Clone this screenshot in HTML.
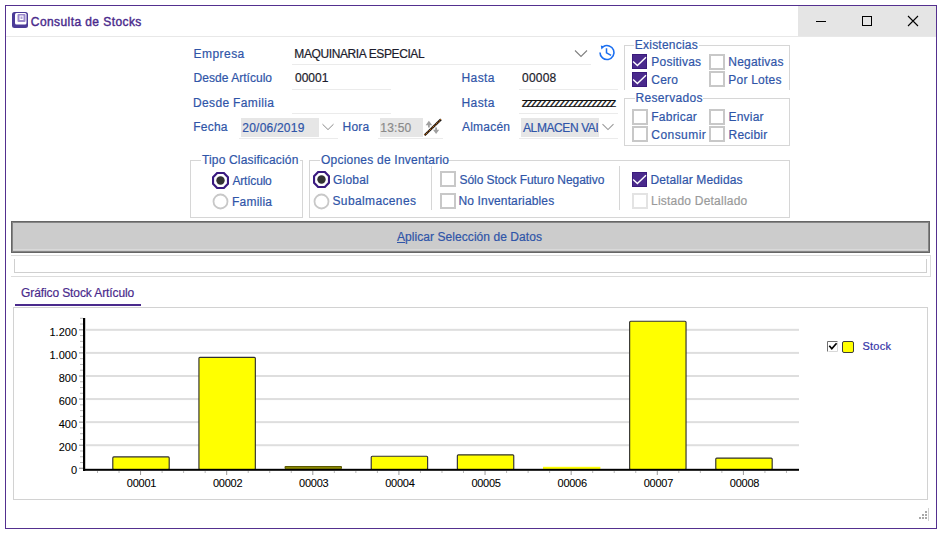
<!DOCTYPE html>
<html><head><meta charset="utf-8"><style>
html,body{margin:0;padding:0;background:#fff;}
body{width:941px;height:533px;position:relative;overflow:hidden;font-family:"Liberation Sans", sans-serif;}
.t{position:absolute;white-space:nowrap;-webkit-text-stroke:0.2px currentColor;}
.r{position:absolute;}
</style></head><body>
<div class="r" style="left:5px;top:5px;width:932px;height:524px;border:1px solid #54308f;box-sizing:border-box;background:#fff;"></div>
<div class="r" style="left:798px;top:6px;width:138px;height:31px;background:#e5e5e5;"></div>
<div class="r" style="left:6px;top:36px;width:930px;height:1px;background:#e8e8e8;"></div>
<svg class="r" style="left:12px;top:12px" width="16" height="16" viewBox="0 0 16 16">
<rect x="0" y="0" width="16" height="16" rx="2.5" fill="#4b3b98"/>
<rect x="3" y="1" width="11.5" height="11.5" rx="1.5" fill="#fff"/>
<rect x="5.5" y="2" width="8" height="8" rx="1" fill="#9a88cc"/>
<rect x="7.5" y="3.5" width="4" height="4.5" fill="#fff"/>
<rect x="8.5" y="4.5" width="2" height="2.5" fill="#b0a4d8"/>
</svg>
<div class="t" style="left:30.8px;top:15.84px;font-size:12px;line-height:12px;color:#4a2a8c;letter-spacing:0.42px;-webkit-text-stroke:0.4px #4a2a8c;">Consulta de Stocks</div>
<div class="r" style="left:816px;top:21px;width:10px;height:1px;background:#000;"></div>
<div class="r" style="left:862px;top:16px;width:10px;height:10px;border:1px solid #000;box-sizing:border-box;"></div>
<svg class="r" style="left:907px;top:15px" width="12" height="12" viewBox="0 0 12 12">
<path d="M1 1 L11 11 M11 1 L1 11" stroke="#000" stroke-width="1.1" fill="none"/></svg>
<div class="t" style="left:193.6px;top:47.84px;font-size:12px;line-height:12px;color:#2f55a8;letter-spacing:0.44px;">Empresa</div>
<div class="t" style="left:294.3px;top:47.84px;font-size:12px;line-height:12px;color:#1c1c2c;letter-spacing:-0.39px;">MAQUINARIA ESPECIAL</div>
<div class="r" style="left:292px;top:64px;width:299px;height:1px;background:#ebebeb;"></div>
<svg class="r" style="left:574px;top:49px" width="14" height="9" viewBox="0 0 14 9"><path d="M1 1.5 L7 7.5 L13 1.5" stroke="#808080" stroke-width="1.1" fill="none"/></svg>
<svg class="r" style="left:596px;top:42px" width="22" height="22" viewBox="0 0 22 22">
<path d="M4 10.5 A7 7 0 1 0 7.3 4.6" stroke="#1a6ef0" stroke-width="1.6" fill="none"/>
<path d="M4.8 3.4 L8.6 4.4 L5.4 7.4 Z" fill="#1a6ef0"/>
<path d="M10.5 6.2 V10.8 L15.1 13.4" stroke="#1a6ef0" stroke-width="1.5" fill="none"/>
</svg>
<div class="t" style="left:193.6px;top:71.84px;font-size:12px;line-height:12px;color:#2f55a8;letter-spacing:0.03px;">Desde Artículo</div>
<div class="t" style="left:295px;top:71.84px;font-size:12px;line-height:12px;color:#1c1c2c;letter-spacing:0px;">00001</div>
<div class="r" style="left:292px;top:89px;width:99px;height:1px;background:#ebebeb;"></div>
<div class="t" style="left:461.5px;top:71.84px;font-size:12px;line-height:12px;color:#2f55a8;letter-spacing:0.4px;">Hasta</div>
<div class="t" style="left:522px;top:71.84px;font-size:12px;line-height:12px;color:#1c1c2c;letter-spacing:0.22px;">00008</div>
<div class="r" style="left:519px;top:89px;width:99px;height:1px;background:#ebebeb;"></div>
<div class="t" style="left:193px;top:96.84px;font-size:12px;line-height:12px;color:#2f55a8;letter-spacing:0.35px;">Desde Familia</div>
<div class="r" style="left:292px;top:113px;width:99px;height:1px;background:#ebebeb;"></div>
<div class="t" style="left:461.5px;top:96.84px;font-size:12px;line-height:12px;color:#2f55a8;letter-spacing:0.4px;">Hasta</div>
<div class="t" style="left:521.5px;top:95.57px;font-size:13.5px;line-height:13.5px;color:#111;letter-spacing:-2.1px;-webkit-text-stroke:0.1px #111;">zzzzzzzzzzzzzzzzzzzz</div>
<div class="r" style="left:519px;top:113px;width:99px;height:1px;background:#ebebeb;"></div>
<div class="t" style="left:193.3px;top:121.44px;font-size:12px;line-height:12px;color:#2f55a8;letter-spacing:0.22px;">Fecha</div>
<div class="r" style="left:241px;top:118px;width:78px;height:19px;background:#e6e6e6;"></div>
<div class="t" style="left:242.3px;top:121.54px;font-size:12px;line-height:12px;color:#2f55a8;letter-spacing:0.22px;">20/06/2019</div>
<svg class="r" style="left:321px;top:123px" width="14" height="8" viewBox="0 0 14 8"><path d="M1.5 1.2 L7 6.6 L12.5 1.2" stroke="#8a8a8a" stroke-width="1" fill="none"/></svg>
<div class="r" style="left:239px;top:138px;width:99px;height:1px;background:#ebebeb;"></div>
<div class="t" style="left:342.5px;top:121.44px;font-size:12px;line-height:12px;color:#2f55a8;letter-spacing:0.22px;">Hora</div>
<div class="r" style="left:380px;top:118px;width:43px;height:19px;background:#e6e6e6;"></div>
<div class="t" style="left:380.3px;top:121.54px;font-size:12px;line-height:12px;color:#8a8a8a;letter-spacing:0.22px;">13:50</div>
<svg class="r" style="left:420px;top:114px" width="26" height="26" viewBox="0 0 26 26">
<path d="M5.6 11.2 L8.9 6.8 L12.2 11.2 Z M8 11 H9.8 V13.6 H8 Z" fill="#a0a0a0"/>
<path d="M13 15.8 L19.2 15.8 L16.1 20 Z M15.2 13.4 H17 V16 H15.2 Z" fill="#a0a0a0"/>
<path d="M4.6 21.2 L21 5.4" stroke="#111" stroke-width="2.2" fill="none"/>
<path d="M4.6 21.2 L21 5.4" stroke="#e07818" stroke-width="1.1" stroke-dasharray="1 1" fill="none"/>
</svg>
<div class="r" style="left:378px;top:138px;width:65px;height:1px;background:#ebebeb;"></div>
<div class="t" style="left:462px;top:121.44px;font-size:12px;line-height:12px;color:#2f55a8;letter-spacing:0.22px;">Almacén</div>
<div class="r" style="left:521px;top:118px;width:78px;height:19px;background:#e6e6e6;"></div>
<div class="t" style="left:522px;top:118px;width:76px;height:19px;overflow:hidden;"><div class="t" style="left:1px;top:3.84px;font-size:12px;line-height:12px;letter-spacing:-0.4px;color:#2f55a8">ALMACEN VALENCIA</div></div>
<svg class="r" style="left:601px;top:123px" width="14" height="8" viewBox="0 0 14 8"><path d="M1.5 1.2 L7 6.6 L12.5 1.2" stroke="#9a9a9a" stroke-width="1.1" fill="none"/></svg>
<div class="r" style="left:519px;top:138px;width:99px;height:1px;background:#ebebeb;"></div>
<div class="r" style="left:624px;top:45px;width:10px;height:1px;background:#d6d6d6;"></div>
<div class="r" style="left:699px;top:45px;width:91px;height:1px;background:#d6d6d6;"></div>
<div class="r" style="left:624px;top:45px;width:1px;height:45px;background:#d6d6d6;"></div>
<div class="r" style="left:789px;top:45px;width:1px;height:45px;background:#d6d6d6;"></div>
<div class="t" style="left:634.8px;top:38.84px;font-size:12px;line-height:12px;color:#2f55a8;letter-spacing:0.22px;">Existencias</div>
<svg class="r" style="left:632.3px;top:54px" width="15" height="15" viewBox="0 0 15 15"><rect x="0" y="0" width="15" height="15" fill="#4a2a8c"/><rect x="0.5" y="0.5" width="14" height="14" fill="none" stroke="#3a1a7c" stroke-width="1"/><path d="M1.1 7.5 L5.4 11.5 L14 3.2" stroke="#fff" stroke-width="1.4" fill="none"/></svg>
<div class="t" style="left:651.3px;top:55.84px;font-size:12px;line-height:12px;color:#2f55a8;letter-spacing:0.22px;">Positivas</div>
<svg class="r" style="left:632.3px;top:72px" width="15" height="15" viewBox="0 0 15 15"><rect x="0" y="0" width="15" height="15" fill="#4a2a8c"/><rect x="0.5" y="0.5" width="14" height="14" fill="none" stroke="#3a1a7c" stroke-width="1"/><path d="M1.1 7.5 L5.4 11.5 L14 3.2" stroke="#fff" stroke-width="1.4" fill="none"/></svg>
<div class="t" style="left:651.3px;top:73.84px;font-size:12px;line-height:12px;color:#2f55a8;letter-spacing:0.22px;">Cero</div>
<div class="r" style="left:709px;top:54px;width:16px;height:16px;border:2px solid #c8c8c8;box-sizing:border-box;"></div>
<div class="t" style="left:728.3px;top:55.84px;font-size:12px;line-height:12px;color:#2f55a8;letter-spacing:0.22px;">Negativas</div>
<div class="r" style="left:709px;top:71px;width:16px;height:16px;border:2px solid #c8c8c8;box-sizing:border-box;"></div>
<div class="t" style="left:728.3px;top:73.84px;font-size:12px;line-height:12px;color:#2f55a8;letter-spacing:0.22px;">Por Lotes</div>
<div class="r" style="left:624px;top:98px;width:11px;height:1px;background:#d6d6d6;"></div>
<div class="r" style="left:703px;top:98px;width:87px;height:1px;background:#d6d6d6;"></div>
<div class="r" style="left:624px;top:98px;width:1px;height:48px;background:#d6d6d6;"></div>
<div class="r" style="left:789px;top:98px;width:1px;height:48px;background:#d6d6d6;"></div>
<div class="r" style="left:624px;top:145px;width:166px;height:1px;background:#d6d6d6;"></div>
<div class="t" style="left:635.5px;top:92.34px;font-size:12px;line-height:12px;color:#2f55a8;letter-spacing:0.33px;">Reservados</div>
<div class="r" style="left:632px;top:109px;width:16px;height:16px;border:2px solid #c8c8c8;box-sizing:border-box;"></div>
<div class="t" style="left:651.3px;top:111.34px;font-size:12px;line-height:12px;color:#2f55a8;letter-spacing:0.22px;">Fabricar</div>
<div class="r" style="left:632px;top:126px;width:16px;height:16px;border:2px solid #c8c8c8;box-sizing:border-box;"></div>
<div class="t" style="left:651.3px;top:129.14px;font-size:12px;line-height:12px;color:#2f55a8;letter-spacing:0.45px;">Consumir</div>
<div class="r" style="left:709px;top:109px;width:16px;height:16px;border:2px solid #c8c8c8;box-sizing:border-box;"></div>
<div class="t" style="left:728.5px;top:111.34px;font-size:12px;line-height:12px;color:#2f55a8;letter-spacing:0.22px;">Enviar</div>
<div class="r" style="left:709px;top:126px;width:16px;height:16px;border:2px solid #c8c8c8;box-sizing:border-box;"></div>
<div class="t" style="left:728.5px;top:129.14px;font-size:12px;line-height:12px;color:#2f55a8;letter-spacing:0.22px;">Recibir</div>
<div class="r" style="left:190px;top:160px;width:11px;height:1px;background:#d6d6d6;"></div>
<div class="r" style="left:300px;top:160px;width:3px;height:1px;background:#d6d6d6;"></div>
<div class="r" style="left:190px;top:160px;width:1px;height:58px;background:#d6d6d6;"></div>
<div class="r" style="left:302px;top:160px;width:1px;height:58px;background:#d6d6d6;"></div>
<div class="r" style="left:190px;top:217px;width:113px;height:1px;background:#d6d6d6;"></div>
<div class="t" style="left:202px;top:153.84px;font-size:12px;line-height:12px;color:#2f55a8;letter-spacing:0.16px;">Tipo Clasificación</div>
<svg class="r" style="left:212px;top:172px" width="17" height="17" viewBox="0 0 17 17"><path d="M5.2 1 H11.8 L16 5.2 V11.8 L11.8 16 H5.2 L1 11.8 V5.2 Z" fill="#fff" stroke="#3a1a80" stroke-width="2.2"/><circle cx="8.5" cy="8.5" r="4.2" fill="#333"/></svg>
<div class="t" style="left:232.5px;top:175.34px;font-size:12px;line-height:12px;color:#2f55a8;letter-spacing:-0.2px;">Artículo</div>
<svg class="r" style="left:212px;top:192.5px" width="17" height="17" viewBox="0 0 17 17"><circle cx="8.5" cy="8.5" r="7" fill="#fff" stroke="#c8c8c8" stroke-width="1.8"/></svg>
<div class="t" style="left:232px;top:195.54px;font-size:12px;line-height:12px;color:#2f55a8;letter-spacing:0.22px;">Familia</div>
<div class="r" style="left:309px;top:160px;width:11px;height:1px;background:#d6d6d6;"></div>
<div class="r" style="left:447px;top:160px;width:343px;height:1px;background:#d6d6d6;"></div>
<div class="r" style="left:309px;top:160px;width:1px;height:58px;background:#d6d6d6;"></div>
<div class="r" style="left:789px;top:160px;width:1px;height:58px;background:#d6d6d6;"></div>
<div class="r" style="left:309px;top:217px;width:481px;height:1px;background:#d6d6d6;"></div>
<div class="t" style="left:321px;top:153.84px;font-size:12px;line-height:12px;color:#2f55a8;letter-spacing:0.22px;">Opciones de Inventario</div>
<svg class="r" style="left:313px;top:171px" width="17" height="17" viewBox="0 0 17 17"><path d="M5.2 1 H11.8 L16 5.2 V11.8 L11.8 16 H5.2 L1 11.8 V5.2 Z" fill="#fff" stroke="#3a1a80" stroke-width="2.2"/><circle cx="8.5" cy="8.5" r="4.2" fill="#333"/></svg>
<div class="t" style="left:333px;top:174.04px;font-size:12px;line-height:12px;color:#2f55a8;letter-spacing:0.22px;">Global</div>
<svg class="r" style="left:313px;top:192.5px" width="17" height="17" viewBox="0 0 17 17"><circle cx="8.5" cy="8.5" r="7" fill="#fff" stroke="#c8c8c8" stroke-width="1.8"/></svg>
<div class="t" style="left:332.5px;top:195.34px;font-size:12px;line-height:12px;color:#2f55a8;letter-spacing:0.37px;">Subalmacenes</div>
<div class="r" style="left:431px;top:166px;width:1px;height:44px;background:#d6d6d6;"></div>
<div class="r" style="left:440px;top:171px;width:16px;height:16px;border:2px solid #c8c8c8;box-sizing:border-box;"></div>
<div class="t" style="left:459.5px;top:174.04px;font-size:12px;line-height:12px;color:#2f55a8;letter-spacing:-0.05px;">Sólo Stock Futuro Negativo</div>
<div class="r" style="left:440px;top:193px;width:16px;height:16px;border:2px solid #c8c8c8;box-sizing:border-box;"></div>
<div class="t" style="left:458.5px;top:195.34px;font-size:12px;line-height:12px;color:#2f55a8;letter-spacing:0.14px;">No Inventariables</div>
<div class="r" style="left:619px;top:166px;width:1px;height:44px;background:#d6d6d6;"></div>
<svg class="r" style="left:632.3px;top:172px" width="15" height="15" viewBox="0 0 15 15"><rect x="0" y="0" width="15" height="15" fill="#4a2a8c"/><rect x="0.5" y="0.5" width="14" height="14" fill="none" stroke="#3a1a7c" stroke-width="1"/><path d="M1.1 7.5 L5.4 11.5 L14 3.2" stroke="#fff" stroke-width="1.4" fill="none"/></svg>
<div class="t" style="left:650.4px;top:174.04px;font-size:12px;line-height:12px;color:#2f55a8;letter-spacing:0.14px;">Detallar Medidas</div>
<div class="r" style="left:632px;top:193px;width:16px;height:16px;border:2px solid #e3e3e3;box-sizing:border-box;"></div>
<div class="t" style="left:651px;top:195.14px;font-size:12px;line-height:12px;color:#9a9a9a;letter-spacing:0.22px;">Listado Detallado</div>
<div class="r" style="left:11px;top:221px;width:919px;height:32px;background:#cccccc;border:1px solid #666;box-shadow:inset 0 0 0 1px #858585;box-sizing:border-box;"></div>
<div class="r" style="left:13px;top:249px;width:915px;height:1px;background:#d9d9d9;"></div>
<div class="t" style="left:397px;top:230.84px;font-size:12px;line-height:12px;color:#2f55a8;letter-spacing:0.06px;"><u style="text-decoration-thickness:1px;text-underline-offset:1px">A</u>plicar Selección de Datos</div>
<div class="r" style="left:11px;top:255px;width:920px;height:1px;background:#dcdcdc;"></div>
<div class="r" style="left:11px;top:276px;width:920px;height:1px;background:#dcdcdc;"></div>
<div class="r" style="left:930px;top:255px;width:1px;height:22px;background:#dcdcdc;"></div>
<div class="r" style="left:14px;top:259px;width:1px;height:14px;background:#cfcfcf;"></div>
<div class="r" style="left:926px;top:259px;width:1px;height:14px;background:#cfcfcf;"></div>
<div class="r" style="left:14px;top:272px;width:913px;height:1px;background:#cfcfcf;"></div>
<div class="t" style="left:21px;top:286.84px;font-size:12px;line-height:12px;color:#4a2a8c;letter-spacing:-0.1px;">Gráfico Stock Artículo</div>
<div class="r" style="left:15px;top:304px;width:126px;height:2px;background:#4a2a8c;"></div>
<div class="r" style="left:13px;top:307px;width:915px;height:193px;border:1px solid #d2d2d2;box-sizing:border-box;"></div>
<div class="r" style="left:925px;top:511px;width:2px;height:2px;background:#a8a8a8;"></div>
<div class="r" style="left:922px;top:514px;width:2px;height:2px;background:#a8a8a8;"></div>
<div class="r" style="left:925px;top:514px;width:2px;height:2px;background:#a8a8a8;"></div>
<div class="r" style="left:919px;top:517px;width:2px;height:2px;background:#a8a8a8;"></div>
<div class="r" style="left:922px;top:517px;width:2px;height:2px;background:#a8a8a8;"></div>
<div class="r" style="left:925px;top:517px;width:2px;height:2px;background:#a8a8a8;"></div>
<div class="r" style="left:928px;top:508px;width:1px;height:13px;background:#d0d0d0;"></div>
<svg class="r" style="left:0px;top:0px" width="941" height="533" viewBox="0 0 941 533">
<rect x="86" y="444.22" width="713" height="2" fill="#dedede"/>
<rect x="79" y="444.62" width="4" height="1.2" fill="#9a9a9a"/>
<rect x="86" y="421.14" width="713" height="2" fill="#dedede"/>
<rect x="79" y="421.54" width="4" height="1.2" fill="#9a9a9a"/>
<rect x="86" y="398.06" width="713" height="2" fill="#dedede"/>
<rect x="79" y="398.46" width="4" height="1.2" fill="#9a9a9a"/>
<rect x="86" y="374.98" width="713" height="2" fill="#dedede"/>
<rect x="79" y="375.38" width="4" height="1.2" fill="#9a9a9a"/>
<rect x="86" y="351.90" width="713" height="2" fill="#dedede"/>
<rect x="79" y="352.30" width="4" height="1.2" fill="#9a9a9a"/>
<rect x="86" y="328.82" width="713" height="2" fill="#dedede"/>
<rect x="79" y="329.22" width="4" height="1.2" fill="#9a9a9a"/>
<rect x="80" y="462.03" width="3" height="1" fill="#b8b8b8"/>
<rect x="80" y="456.26" width="3" height="1" fill="#b8b8b8"/>
<rect x="80" y="450.49" width="3" height="1" fill="#b8b8b8"/>
<rect x="80" y="438.95" width="3" height="1" fill="#b8b8b8"/>
<rect x="80" y="433.18" width="3" height="1" fill="#b8b8b8"/>
<rect x="80" y="427.41" width="3" height="1" fill="#b8b8b8"/>
<rect x="80" y="415.87" width="3" height="1" fill="#b8b8b8"/>
<rect x="80" y="410.10" width="3" height="1" fill="#b8b8b8"/>
<rect x="80" y="404.33" width="3" height="1" fill="#b8b8b8"/>
<rect x="80" y="392.79" width="3" height="1" fill="#b8b8b8"/>
<rect x="80" y="387.02" width="3" height="1" fill="#b8b8b8"/>
<rect x="80" y="381.25" width="3" height="1" fill="#b8b8b8"/>
<rect x="80" y="369.71" width="3" height="1" fill="#b8b8b8"/>
<rect x="80" y="363.94" width="3" height="1" fill="#b8b8b8"/>
<rect x="80" y="358.17" width="3" height="1" fill="#b8b8b8"/>
<rect x="80" y="346.63" width="3" height="1" fill="#b8b8b8"/>
<rect x="80" y="340.86" width="3" height="1" fill="#b8b8b8"/>
<rect x="80" y="335.09" width="3" height="1" fill="#b8b8b8"/>
<rect x="80" y="323.55" width="3" height="1" fill="#b8b8b8"/>
<rect x="80" y="317.78" width="3" height="1" fill="#b8b8b8"/>
<rect x="79" y="467.70" width="4" height="1.2" fill="#9a9a9a"/>
<rect x="112.80" y="456.91" width="56.4" height="12.59" rx="1" fill="#ffff00" stroke="#303030" stroke-width="1.15"/>
<rect x="198.94" y="357.32" width="56.4" height="112.18" rx="1" fill="#ffff00" stroke="#303030" stroke-width="1.15"/>
<rect x="284.58" y="466" width="57.4" height="3" rx="1" fill="#5a5800"/>
<rect x="285.58" y="467" width="55.4" height="2" fill="#8a8800"/>
<rect x="371.22" y="456.22" width="56.4" height="13.28" rx="1" fill="#ffff00" stroke="#303030" stroke-width="1.15"/>
<rect x="457.36" y="454.84" width="56.4" height="14.66" rx="1" fill="#ffff00" stroke="#303030" stroke-width="1.15"/>
<rect x="543.00" y="466.8" width="57.4" height="2.2" fill="#ffff00"/>
<rect x="629.64" y="321.20" width="56.4" height="148.30" rx="1" fill="#ffff00" stroke="#303030" stroke-width="1.15"/>
<rect x="715.78" y="458.07" width="56.4" height="11.43" rx="1" fill="#ffff00" stroke="#303030" stroke-width="1.15"/>
<rect x="97.00" y="471" width="1" height="2" fill="#b8b8b8"/>
<rect x="118.53" y="471" width="1" height="2" fill="#b8b8b8"/>
<rect x="140.06" y="471" width="1" height="4" fill="#9a9a9a"/>
<rect x="161.59" y="471" width="1" height="2" fill="#b8b8b8"/>
<rect x="183.12" y="471" width="1" height="2" fill="#b8b8b8"/>
<rect x="204.65" y="471" width="1" height="2" fill="#b8b8b8"/>
<rect x="226.18" y="471" width="1" height="4" fill="#9a9a9a"/>
<rect x="247.71" y="471" width="1" height="2" fill="#b8b8b8"/>
<rect x="269.24" y="471" width="1" height="2" fill="#b8b8b8"/>
<rect x="290.77" y="471" width="1" height="2" fill="#b8b8b8"/>
<rect x="312.30" y="471" width="1" height="4" fill="#9a9a9a"/>
<rect x="333.83" y="471" width="1" height="2" fill="#b8b8b8"/>
<rect x="355.36" y="471" width="1" height="2" fill="#b8b8b8"/>
<rect x="376.89" y="471" width="1" height="2" fill="#b8b8b8"/>
<rect x="398.42" y="471" width="1" height="4" fill="#9a9a9a"/>
<rect x="419.95" y="471" width="1" height="2" fill="#b8b8b8"/>
<rect x="441.48" y="471" width="1" height="2" fill="#b8b8b8"/>
<rect x="463.01" y="471" width="1" height="2" fill="#b8b8b8"/>
<rect x="484.54" y="471" width="1" height="4" fill="#9a9a9a"/>
<rect x="506.07" y="471" width="1" height="2" fill="#b8b8b8"/>
<rect x="527.60" y="471" width="1" height="2" fill="#b8b8b8"/>
<rect x="549.13" y="471" width="1" height="2" fill="#b8b8b8"/>
<rect x="570.66" y="471" width="1" height="4" fill="#9a9a9a"/>
<rect x="592.19" y="471" width="1" height="2" fill="#b8b8b8"/>
<rect x="613.72" y="471" width="1" height="2" fill="#b8b8b8"/>
<rect x="635.25" y="471" width="1" height="2" fill="#b8b8b8"/>
<rect x="656.78" y="471" width="1" height="4" fill="#9a9a9a"/>
<rect x="678.31" y="471" width="1" height="2" fill="#b8b8b8"/>
<rect x="699.84" y="471" width="1" height="2" fill="#b8b8b8"/>
<rect x="721.37" y="471" width="1" height="2" fill="#b8b8b8"/>
<rect x="742.90" y="471" width="1" height="4" fill="#9a9a9a"/>
<rect x="764.43" y="471" width="1" height="2" fill="#b8b8b8"/>
<rect x="785.96" y="471" width="1" height="2" fill="#b8b8b8"/>
<rect x="83" y="318" width="2.2" height="153" fill="#000"/>
<rect x="83" y="468.8" width="716" height="2" fill="#000"/>
<rect x="827" y="341" width="11" height="11" fill="#fff"/><path d="M827.5 351.5 V341.5 H837.5" stroke="#707070" stroke-width="1" fill="none"/><path d="M828.5 351.5 H837.5 V342.5" stroke="#d8d8d8" stroke-width="1" fill="none"/>
<path d="M829.3 345.8 L831.8 348.8 L836.6 343.2" stroke="#000" stroke-width="1.7" fill="none"/>
<rect x="842.5" y="341.5" width="11" height="11" rx="1.5" fill="#ffff00" stroke="#3c3c3c" stroke-width="1"/>
</svg>
<div class="t" style="left:1px;width:76px;text-align:right;top:465.29px;font-size:11px;line-height:11px;color:#000;-webkit-text-stroke:0.08px #000">0</div>
<div class="t" style="left:1px;width:76px;text-align:right;top:442.21px;font-size:11px;line-height:11px;color:#000;-webkit-text-stroke:0.08px #000">200</div>
<div class="t" style="left:1px;width:76px;text-align:right;top:419.13px;font-size:11px;line-height:11px;color:#000;-webkit-text-stroke:0.08px #000">400</div>
<div class="t" style="left:1px;width:76px;text-align:right;top:396.05px;font-size:11px;line-height:11px;color:#000;-webkit-text-stroke:0.08px #000">600</div>
<div class="t" style="left:1px;width:76px;text-align:right;top:372.97px;font-size:11px;line-height:11px;color:#000;-webkit-text-stroke:0.08px #000">800</div>
<div class="t" style="left:1px;width:76px;text-align:right;top:349.89px;font-size:11px;line-height:11px;color:#000;-webkit-text-stroke:0.08px #000">1.000</div>
<div class="t" style="left:1px;width:76px;text-align:right;top:326.81px;font-size:11px;line-height:11px;color:#000;-webkit-text-stroke:0.08px #000">1.200</div>
<div class="t" style="left:111.50px;width:60px;text-align:center;top:478.19px;font-size:11px;line-height:11px;letter-spacing:-0.25px;color:#000;-webkit-text-stroke:0.08px #000">00001</div>
<div class="t" style="left:197.64px;width:60px;text-align:center;top:478.19px;font-size:11px;line-height:11px;letter-spacing:-0.25px;color:#000;-webkit-text-stroke:0.08px #000">00002</div>
<div class="t" style="left:283.78px;width:60px;text-align:center;top:478.19px;font-size:11px;line-height:11px;letter-spacing:-0.25px;color:#000;-webkit-text-stroke:0.08px #000">00003</div>
<div class="t" style="left:369.92px;width:60px;text-align:center;top:478.19px;font-size:11px;line-height:11px;letter-spacing:-0.25px;color:#000;-webkit-text-stroke:0.08px #000">00004</div>
<div class="t" style="left:456.06px;width:60px;text-align:center;top:478.19px;font-size:11px;line-height:11px;letter-spacing:-0.25px;color:#000;-webkit-text-stroke:0.08px #000">00005</div>
<div class="t" style="left:542.20px;width:60px;text-align:center;top:478.19px;font-size:11px;line-height:11px;letter-spacing:-0.25px;color:#000;-webkit-text-stroke:0.08px #000">00006</div>
<div class="t" style="left:628.34px;width:60px;text-align:center;top:478.19px;font-size:11px;line-height:11px;letter-spacing:-0.25px;color:#000;-webkit-text-stroke:0.08px #000">00007</div>
<div class="t" style="left:714.48px;width:60px;text-align:center;top:478.19px;font-size:11px;line-height:11px;letter-spacing:-0.25px;color:#000;-webkit-text-stroke:0.08px #000">00008</div>
<div class="t" style="left:862.4px;top:341.19px;font-size:11px;line-height:11px;color:#3535a8;letter-spacing:0.27px;">Stock</div>
</body></html>
